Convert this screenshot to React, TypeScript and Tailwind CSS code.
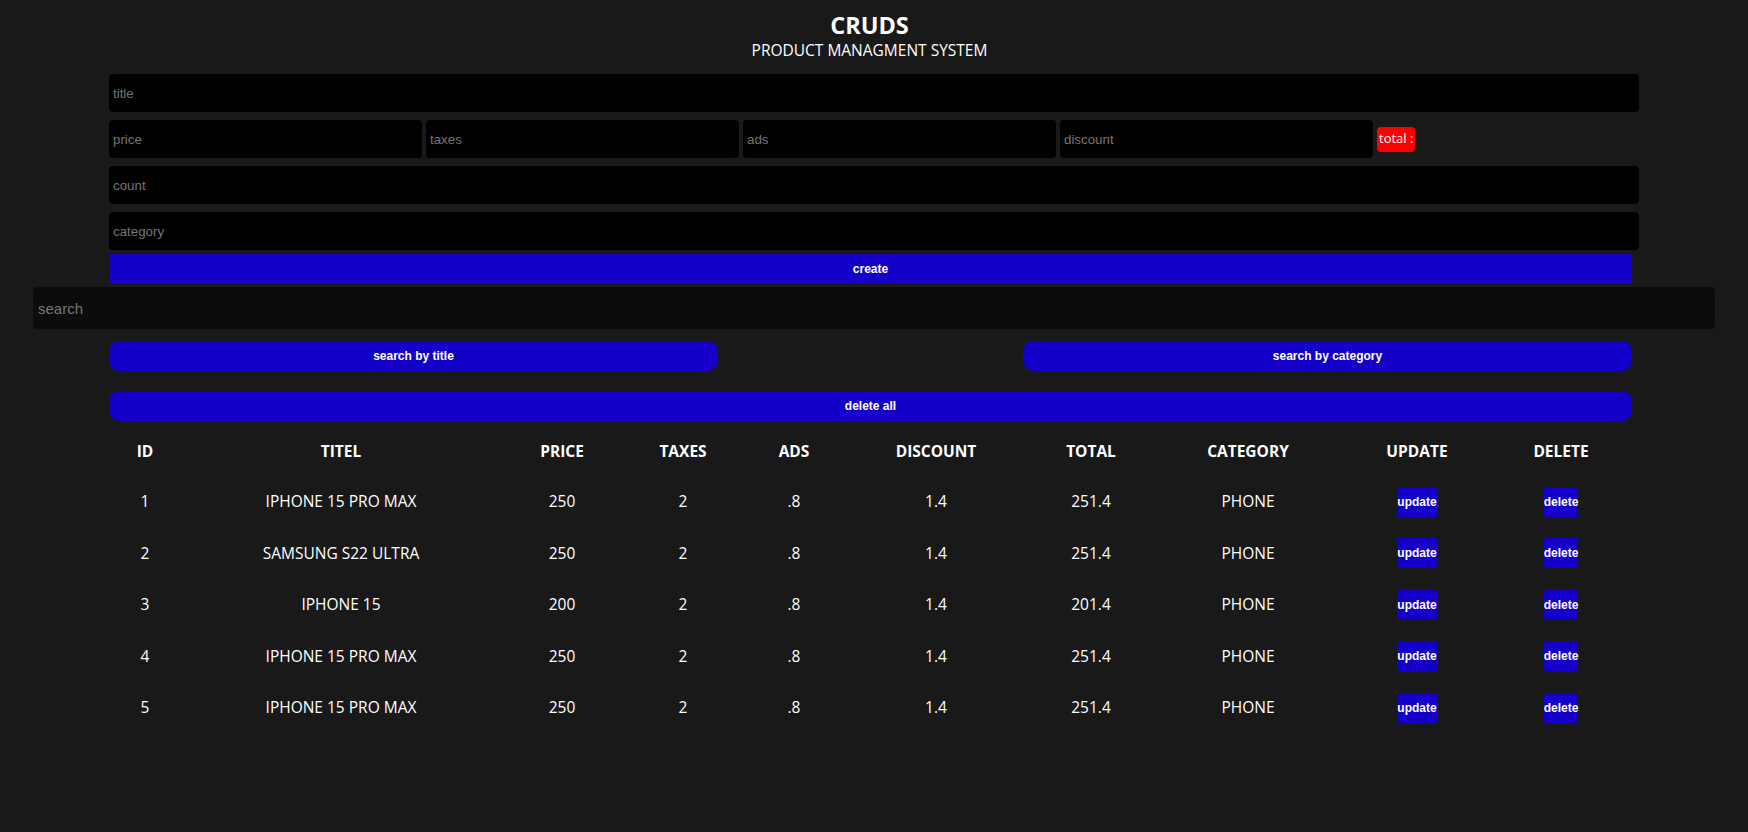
import { useState } from "react"

type Product = {
  id: number
  title: string
  price: number
  taxes: number
  ads: string
  discount: number
  total: number
  category: string
}

const products: Product[] = [
  { id: 1, title: "IPHONE 15 PRO MAX", price: 250, taxes: 2, ads: ".8", discount: 1.4, total: 251.4, category: "PHONE" },
  { id: 2, title: "SAMSUNG S22 ULTRA", price: 250, taxes: 2, ads: ".8", discount: 1.4, total: 251.4, category: "PHONE" },
  { id: 3, title: "IPHONE 15", price: 200, taxes: 2, ads: ".8", discount: 1.4, total: 201.4, category: "PHONE" },
  { id: 4, title: "IPHONE 15 PRO MAX", price: 250, taxes: 2, ads: ".8", discount: 1.4, total: 251.4, category: "PHONE" },
  { id: 5, title: "IPHONE 15 PRO MAX", price: 250, taxes: 2, ads: ".8", discount: 1.4, total: 251.4, category: "PHONE" },
]

const inputCls =
  "h-[38px] bg-black rounded-[4px] px-[4px] text-[13.33px] text-white placeholder:text-[#757575] outline-none font-['Liberation_Sans',Arial,sans-serif]"

const btnCls =
  "bg-[#1500c9] text-white text-[12px] font-bold font-['Liberation_Sans',Arial,sans-serif] h-[30px]"

export default function App() {
  const [search, setSearch] = useState("")

  return (
    <div className="min-h-screen w-full bg-[#191919] flex flex-col items-center text-white font-['Open_Sans','Noto_Sans',sans-serif]">
      {/* Header */}
      <div className="pt-[10px] mr-[9px] text-center">
        <h2 className="text-[23.5px] leading-[30px] font-bold">CRUDS</h2>
        <p className="text-[15.5px] leading-[20px]">PRODUCT MANAGMENT SYSTEM</p>
      </div>

      {/* Form */}
      <div className="w-[1530px] mt-[14px] flex flex-col">
        <input className={`${inputCls} w-full`} placeholder="title" />
        <div className="flex items-center gap-[4px] mt-2">
          <input className={`${inputCls} w-[313px]`} placeholder="price" />
          <input className={`${inputCls} w-[313px]`} placeholder="taxes" />
          <input className={`${inputCls} w-[313px]`} placeholder="ads" />
          <input className={`${inputCls} w-[313px]`} placeholder="discount" />
          <span className="bg-[#ff0000] rounded-[4px] px-[2px] h-[25px] flex items-center text-[13px]">total :</span>
        </div>
        <input className={`${inputCls} w-full mt-2`} placeholder="count" />
        <input className={`${inputCls} w-full mt-2`} placeholder="category" />
        <button className={`${btnCls} w-[1523px] mt-[4px] h-[29px] rounded-[2px]`}>create</button>
      </div>

      {/* Search */}
      <input
        autoFocus
        value={search}
        onChange={(e) => setSearch(e.target.value)}
        className="w-[1682px] h-[42px] mt-[3px] bg-[#0c0c0c] rounded-[4px] pl-[5px] text-[15px] text-white placeholder:text-[#757575] outline-none caret-white font-['Liberation_Sans',Arial,sans-serif]"
        placeholder="search"
      />

      <div className="w-[1530px] flex flex-col">
        <div className="w-[1523px] flex justify-between mt-3">
          <button className={`${btnCls} w-[609px] rounded-[10px]`}>search by title</button>
          <button className={`${btnCls} w-[609px] rounded-[10px]`}>search by category</button>
        </div>
        <button className={`${btnCls} w-[1523px] mt-5 rounded-[10px]`}>delete all</button>

        {/* Table */}
        <table className="w-[1520px] table-fixed mt-[6px] text-[15.5px] text-center">
          <thead>
            <tr className="h-[49px] font-bold">
              <th className="w-[72px]">ID</th>
              <th className="w-[320px]">TITEL</th>
              <th className="w-[122px]">PRICE</th>
              <th className="w-[120px]">TAXES</th>
              <th className="w-[102px]">ADS</th>
              <th className="w-[182px]">DISCOUNT</th>
              <th className="w-[128px]">TOTAL</th>
              <th className="w-[186px]">CATEGORY</th>
              <th className="w-[152px]">UPDATE</th>
              <th className="w-[136px]">DELETE</th>
            </tr>
          </thead>
          <tbody>
            {products.map((p) => (
              <tr key={p.id} className="h-[51.5px]">
                <td>{p.id}</td>
                <td>{p.title}</td>
                <td>{p.price}</td>
                <td>{p.taxes}</td>
                <td>{p.ads}</td>
                <td>{p.discount}</td>
                <td>{p.total}</td>
                <td>{p.category}</td>
                <td>
                  <button className={`${btnCls} rounded-[2px]`}>update</button>
                </td>
                <td>
                  <button className={`${btnCls} rounded-[2px]`}>delete</button>
                </td>
              </tr>
            ))}
          </tbody>
        </table>
      </div>
    </div>
  )
}
